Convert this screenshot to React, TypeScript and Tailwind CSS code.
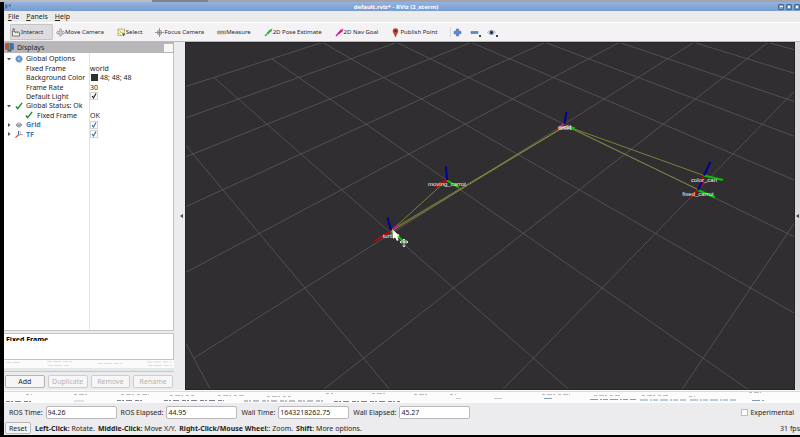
import React from 'react';

const HORIZON = -203.1;

// Projects a ground-grid vertex to viewport coordinates.
function project(u: number, v: number): [number, number] {
  const n = u + v;
  const scale = 1 / (0.00589 + 0.000842 * n);
  return [488.5 + (0.264 + (u - v) / 2) * scale, HORIZON + 3.306 * scale];
}

function gridLines() {
  const lines: number[][] = [];
  for (let u = -2; u <= 8; u++) lines.push([...project(u, -3), ...project(u, 7)]);
  for (let v = -3; v <= 7; v++) lines.push([...project(-2, v), ...project(8, v)]);
  return lines;
}

function Scene() {
  return (
    <svg viewBox="186 43 608 346" preserveAspectRatio="xMidYMid slice" className="block h-full w-full" aria-label="3D view">
      <g stroke="#59585a" strokeWidth="0.8">
        {gridLines().map(([x1, y1, x2, y2], i) => (
          <line key={i} x1={x1} y1={y1} x2={x2} y2={y2} />
        ))}
      </g>
      <g stroke="#93933f" strokeWidth="0.8" fill="none">
        <path d="M392 230L447 180" />
        <path d="M392 231L565 126.500" />
        <path d="M392 229.500L565 126" />
        <path d="M566 126L704 175.500" />
        <path d="M566 126L698 189.500" />
      </g>
      <g strokeWidth="2" fill="none">
        <path stroke="#c80000" d="M447 180.500L435 187M391 231L375 241M562 126L557 129M703.500 176L702.500 186M698 190L690.500 198" />
        <path stroke="#00c800" d="M447 180.500L459 187.500M391 231L406 243M567 126L575 128.500M704 175.500L723 180M698 190L715 197.500" />
        <path stroke="#00009c" d="M447 180L446 166.500M391 230L387.500 217.500M564.500 124L566.500 112M704 175.500L710.500 162M698 190L702 182" />
        <path stroke="#d01880" d="M393 229.500L398 225.500M559 127L564 124M568 125L570 126.500" />
      </g>
      <g fill="#f0f0f0" fontFamily="'Liberation Sans', Arial, sans-serif" fontSize="6" textAnchor="middle">
        <text x="447" y="186">moving_carrot</text>
        <text x="391" y="238">turtle2</text>
        <text x="704" y="182">color_can</text>
        <text x="698" y="196">fixed_carrot</text>
        <text x="565" y="129" fontSize="5">world</text>
        <text x="565" y="130" fontSize="5">turtle1</text>
      </g>
      <path d="M392.500 229.500L393 239L395 237.300L397 241L398.600 240L396.800 236.500L399.500 236Z" fill="#fff" />
      <path d="M404 239v8M400 242h8M402.500 240.500l1.500-1.500l1.500 1.500M402.500 245.500l1.500 1.500l1.500-1.500M401.500 240.500l-1.500 1.500l1.500 1.500M406.500 240.500l1.500 1.500l-1.500 1.500" stroke="#eee" strokeWidth="0.9" fill="none" />
    </svg>
  );
}

function Icon({ children, size = 'size-[9px]' }: { children: React.ReactNode; size?: string }) {
  return (
    <svg viewBox="0 0 18 18" className={`${size} shrink-0`} fill="none" aria-hidden="true">
      {children}
    </svg>
  );
}

const hand = (
  <Icon>
    <path d="M3 16v-6l-1-3 2 1V1.500h2.500V8H15c2 0 2 1 2 2v6H5z" fill="#f2f2f2" stroke="#4c4c4c" strokeWidth="1.500" />
    <path d="M9.500 8v3M13 8v3" stroke="#4c4c4c" />
  </Icon>
);
const move = (
  <Icon>
    <path d="M9 1l3 4h-1.500v3H14V6l3.500 3.500L14 13v-2h-3.500v5h-3v-5H4v2L.5 9.500 4 6v2h3.500V5H6z" fill="#ddd" stroke="#888" strokeWidth="1.300" />
  </Icon>
);
const select = (
  <Icon>
    <path d="M2 2h13v13H2z" fill="#f6f1a8" stroke="#777050" strokeWidth="1.500" strokeDasharray="2 1" />
    <path d="M5 5l5 5M5 11l3-3" stroke="#b3a84c" />
    <path d="M10 9l7 4-3 1-1 3z" fill="#555" />
  </Icon>
);
const focus = (
  <Icon>
    <circle cx="9" cy="9" r="4.500" fill="#ddd" stroke="#9a9a9a" strokeWidth="2" />
    <path d="M9 0v18M0 9h18" stroke="#9a9a9a" strokeWidth="2" />
    <circle cx="9" cy="9" r="2" fill="#777" />
  </Icon>
);
const ruler = (
  <Icon>
    <path d="M1 6.500h16v5H1z" fill="#dccb9a" stroke="#8d7c4c" strokeWidth="1.300" />
    <path d="M4 7v3M7 7v3M10 7v3M13 7v3" stroke="#6d5c34" />
  </Icon>
);
const arrow = (color: string) => (
  <Icon>
    <path d="M2 16l8-8" stroke={color} strokeWidth="3" />
    <path d="M17 1l-3 8-5-4z" fill={color} />
    <path d="M7 11l6-6" stroke={color} strokeWidth="4" />
  </Icon>
);
const pin = (
  <Icon>
    <path d="M9 18C8 13 4 10 4 6a5 5 0 0 1 10 0c0 4-4 7-5 12z" fill="#c8432a" stroke="#7a2c1c" />
    <circle cx="9" cy="6" r="2.200" fill="#4d2016" />
  </Icon>
);

const tools = [
  { label: 'Move Camera', icon: move },
  { label: 'Select', icon: select },
  { label: 'Focus Camera', icon: focus },
  { label: 'Measure', icon: ruler },
  { label: '2D Pose Estimate', icon: arrow('#25b93c') },
  { label: '2D Nav Goal', icon: arrow('#d0198c') },
  { label: 'Publish Point', icon: pin },
];

function Toolbar() {
  return (
    <div role="toolbar" className="flex h-[19px] shrink-0 items-center overflow-hidden border-b border-[#bdbabd] bg-[#f5f2f5] pl-[6px] text-[6px]">
      <button className="mr-[3px] flex h-4 w-[43px] shrink-0 items-center gap-px rounded-[1px] border border-[#c6c4c6] bg-[#dddbdd] whitespace-nowrap">
        {hand}Interact
      </button>
      {tools.map((t) => (
        <button key={t.label} className="flex h-4 shrink-0 items-center pr-[13px] whitespace-nowrap">
          {t.icon}
          {t.label}
        </button>
      ))}
      <span className="h-[10px] w-px bg-[#dcd9dc]" />
      <button aria-label="Add tool" className="ml-[2px]">
        <Icon>
          <path d="M6.500 2h5v4.500H16v5h-4.500V16h-5v-4.500H2v-5h4.500z" fill="#5b8ac6" stroke="#3a689f" />
        </Icon>
      </button>
      <button aria-label="Remove tool" className="ml-2 flex items-end">
        <Icon>
          <path d="M2 7h14v4H2z" fill="#5b8ac6" stroke="#3a689f" />
        </Icon>
        <i className="size-[2px] bg-[#444]" />
      </button>
      <button aria-label="Tool visibility" className="ml-[6px] flex items-end">
        <Icon>
          <path d="M1 9c4-6 12-6 16 0-4 6-12 6-16 0z" fill="#e8e8ec" stroke="#888" />
          <circle cx="9" cy="9" r="4" fill="#3c5a8c" />
          <circle cx="9" cy="9" r="1.800" fill="#111" />
        </Icon>
        <i className="size-[2px] bg-[#444]" />
      </button>
    </div>
  );
}

function Tick({ color = '#222', label }: { color?: string; label: string }) {
  return (
    <span className="relative flex size-[8px]">
      <input type="checkbox" defaultChecked aria-label={label} className="size-[8px] appearance-none border border-[#d2d2d2] bg-white" />
      <svg viewBox="0 0 16 16" className="pointer-events-none absolute inset-0" fill="none" aria-hidden="true">
        <path d="M4 8l3 4 5-9" stroke={color} strokeWidth="2.400" />
      </svg>
    </span>
  );
}

const check = (
  <Icon size="size-[8px]">
    <path d="M2 10l4 5L16 2" stroke="#1c8a34" strokeWidth="3.200" />
  </Icon>
);
const gear = (
  <Icon size="size-[8px]">
    <circle cx="9" cy="9" r="7" fill="#6f9ad0" stroke="#4a78b4" strokeWidth="2" strokeDasharray="2.500 1.500" />
    <circle cx="9" cy="9" r="3" fill="#9dbde4" />
  </Icon>
);
const gridIcon = (
  <Icon size="size-[8px]">
    <path d="M9 4l7 5-7 5-7-5zM5 7l7 5M13 7l-8 5" stroke="#666" strokeWidth="1.700" />
  </Icon>
);
const tfIcon = (
  <Icon size="size-[8px]">
    <path d="M8 11V2" stroke="#2c50b0" strokeWidth="2" />
    <path d="M8 11l-7 6" stroke="#d03020" strokeWidth="2.500" />
    <path d="M8 11l9-1" stroke="#c06a50" strokeWidth="2" />
    <path d="M12 3v5" stroke="#7a8cc0" strokeWidth="1.500" />
  </Icon>
);

type Row = {
  label: string;
  value?: React.ReactNode;
  icon?: React.ReactNode;
  toggle?: 'open' | 'closed';
  nested?: boolean;
  strong?: boolean;
};

const rows: Row[] = [
  { label: 'Global Options', icon: gear, toggle: 'open' },
  { label: 'Fixed Frame', value: 'world' },
  {
    label: 'Background Color',
    value: (
      <>
        <i className="mr-[2px] ml-px size-[7px] bg-[#303030]" />
        48; 48; 48
      </>
    ),
  },
  { label: 'Frame Rate', value: '30' },
  { label: 'Default Light', value: <Tick label="Default Light" /> },
  { label: 'Global Status: Ok', icon: check, toggle: 'open' },
  { label: 'Fixed Frame', icon: check, nested: true, value: 'OK' },
  { label: 'Grid', icon: gridIcon, toggle: 'closed', strong: true, value: <Tick color="#3b6ea8" label="Grid" /> },
  { label: 'TF', icon: tfIcon, toggle: 'closed', strong: true, value: <Tick color="#3b6ea8" label="TF" /> },
];

function Tree() {
  return (
    <div className="min-h-0 flex-1 border-r border-b border-[#c4c2c4] bg-white">
      <div className="flex h-full bg-[linear-gradient(#e4e4e4,#e4e4e4)] bg-[length:1px_100%] bg-[position:85px_0] bg-no-repeat">
        <div role="tree" className="grid h-[86px] w-full grid-rows-9 pt-px">
          {rows.map((r, i) => (
            <div key={i} role="treeitem" className="grid min-h-0 grid-cols-[86px_1fr] items-center leading-[9px]">
              <div className={`flex items-center whitespace-nowrap ${r.nested ? 'pl-[21px]' : r.icon ? 'pl-[3px]' : 'pl-[22px]'}`}>
                {r.toggle && (
                  <svg viewBox="0 0 8 8" className="mr-1 size-[4px]" aria-hidden="true">
                    <path d={r.toggle === 'open' ? 'M0 2h8L4 7z' : 'M2 0v8l5-4z'} fill="#555" />
                  </svg>
                )}
                {r.icon && <span className={r.nested ? 'mr-1' : 'mr-[3px]'}>{r.icon}</span>}
                <span className={r.strong ? 'font-bold text-[#3d7cc4]' : ''}>{r.label}</span>
              </div>
              <div className="flex items-center whitespace-nowrap">{r.value}</div>
            </div>
          ))}
        </div>
      </div>
    </div>
  );
}

function Displays() {
  return (
    <section className="flex w-[170px] shrink-0 flex-col">
      <header className="flex h-[11px] shrink-0 items-center gap-[3px] bg-[#b9b6b9] pr-px pl-px">
        <svg viewBox="0 0 18 18" className="size-[9px]" aria-hidden="true">
          <path d="M1 1h16v12H1z" fill="#333" />
          <path d="M2 2h5v10H2z" fill="#d44" />
          <path d="M7 2h4v10H7z" fill="#4b4" />
          <path d="M11 2h5v10h-5z" fill="#46d" />
          <path d="M5 14h8v3H5z" fill="#555" />
        </svg>
        <h2 className="flex-1 leading-[10px]">Displays</h2>
        <button aria-label="Close panel" className="h-[8px] w-[9px] bg-[#f8f7f8]" />
      </header>
      <Tree />
      <div className="mt-[2px] h-[27px] shrink-0 border border-l-0 border-[#c4c2c4] bg-white px-[2px] pt-[2px]">
        <div className="h-[5px] overflow-hidden text-[7px] leading-[8px] font-bold text-black">Fixed Frame</div>
      </div>
      <svg viewBox="0 0 170 12" preserveAspectRatio="none" className="h-[12px] w-full shrink-0" aria-hidden="true">
        <path d="M0 0h170v8H0z" fill="#fbfbfb" />
        <path d="M0 8h170v3H0z" fill="#e3e7e5" />
        <path d="M0 11.500h170" stroke="#c8c6c8" />
        <path d="M2 2.500h16M43 1.500h25M94 3.500h24M143 2h24M44 5.500h22M144 5.500h24" stroke="#ccd0cd" strokeWidth="0.700" strokeDasharray="5 1 8 2" />
      </svg>
      <div className="mt-[3px] mb-[2px] grid h-[13px] shrink-0 grid-cols-4 gap-[3px] px-px">
        {['Add', 'Duplicate', 'Remove', 'Rename'].map((b, i) => (
          <button
            key={b}
            disabled={i > 0}
            className="rounded-[2px] border border-[#b5b2b5] bg-[#f7f6f7] leading-[10px] text-[#222] disabled:border-[#cfcdcf] disabled:text-[#b4b2b4]"
          >
            {b}
          </button>
        ))}
      </div>
    </section>
  );
}

function Gutter({ className }: { className: string }) {
  return (
    <div className={`flex shrink-0 items-center justify-center ${className}`}>
      <svg viewBox="0 0 6 8" className="h-1 w-[3px]" aria-hidden="true">
        <path d="M6 0v8L0 4z" fill="#444" />
      </svg>
    </div>
  );
}

function Residue() {
  return (
    <svg viewBox="0 0 796 13" preserveAspectRatio="none" className="h-[13px] w-full shrink-0 bg-[#fcfcfd]" aria-hidden="true">
      <path d="M0 1.500h796" stroke="#dad8dc" />
      <path d="M22 4.500h6M70 4.500h16M117 4.500h28M166 5.500h24M214 5.500h26M263 6.500h24M322 3.500h7M368 3.500h14M410 4.500h14M446 4.500h6M538 4.500h28M590 5.500h26M638 5.500h26M685 6.500h6M745 2.500h12" stroke="#9c9ca2" strokeWidth="0.700" strokeDasharray="3 2 5 1 2 3" />
      <path d="M2 11.500h26M113 10.500h26M160 10.500h60M240 11h80M330 11.500h66" stroke="#5c6270" strokeWidth="0.800" strokeDasharray="4 1 2 2 6 3" />
      <path d="M540 8.500h10M586 9.500h46M636 10h46M686 10h46M748 10.500h12" stroke="#6484a4" strokeWidth="0.800" strokeDasharray="8 2 2 1 5 2" />
      <path d="M70 11h10M452 8.500h5M490 8.500h8" stroke="#bbb" strokeWidth="0.800" />
    </svg>
  );
}

const clocks = [
  ['ROS Time:', '94.26', 'ros-time'],
  ['ROS Elapsed:', '44.95', 'ros-elapsed'],
  ['Wall Time:', '1643218262.75', 'wall-time'],
  ['Wall Elapsed:', '45.27', 'wall-elapsed'],
];

export default function App() {
  return (
    <div className="flex h-screen min-h-[300px] flex-col overflow-hidden bg-black font-['Noto_Sans','DejaVu_Sans',sans-serif] text-[7px] leading-[9px] text-[#262626]">
      <div className="h-[2px] shrink-0 bg-[linear-gradient(90deg,#bcbabc_19%,#858085_19%_26%,#a7a2a7_26%)]" />
      <div className="ml-1 flex min-h-0 flex-1 flex-col border-b-[2px] border-black bg-[#ecebed]">
        <header className="grid h-[9px] shrink-0 grid-cols-[1fr_auto_1fr] items-center bg-[linear-gradient(#93b3e0,#789ccd)] text-[6px] leading-[8px] text-white">
          <svg viewBox="0 0 12 10" className="ml-px h-[5px] w-[6px]" aria-hidden="true">
            <path d="M0 1h5v8H0zM7 1h5v4H7z" fill="#60718c" />
          </svg>
          <h1 className="pr-3 font-bold">default.rviz* - RViz (2_xterm)</h1>
          <div className="flex justify-end gap-[2px]">
            {['Minimize', 'Maximize', 'Close'].map((n) => (
              <button key={n} aria-label={n} className="flex size-[6px] items-center justify-center rounded-[1px] border border-[#49699a] bg-[#7b9dcc]">
                <i className={n === 'Minimize' ? 'h-px w-[3px] bg-white' : 'size-[2px] bg-white'} />
              </button>
            ))}
          </div>
        </header>
        <nav className="flex h-[12px] shrink-0 items-center gap-[7px] border-b border-white bg-[#ecebec] pl-[4px]">
          {['File', 'Panels', 'Help'].map((m) => (
            <button key={m} className="leading-[10px]">
              <span className="underline">{m[0]}</span>
              {m.slice(1)}
            </button>
          ))}
        </nav>
        <Toolbar />
        <main className="flex min-h-0 flex-1">
          <Displays />
          <Gutter className="w-[11px] pl-1" />
          <div className="min-w-0 flex-1 overflow-hidden border border-[#242325] bg-[#302e30]">
            <Scene />
          </div>
          <Gutter className="w-[5px] bg-[#dcdadd]" />
        </main>
        <Residue />
        <form className="flex h-[18px] shrink-0 items-center pl-[5px]">
          {clocks.map(([label, value, id]) => (
            <div key={id} className="mr-1 flex items-center gap-[3px]">
              <label htmlFor={id} className="whitespace-nowrap">{label}</label>
              <input id={id} readOnly defaultValue={value} className="h-[13px] w-[71px] rounded-[2px] border border-[#bbb8bb] bg-white px-px" />
            </div>
          ))}
          <label className="mr-[6px] ml-auto flex items-center gap-[2px]">
            <input type="checkbox" className="size-[7px] appearance-none border border-[#bdbdbd] bg-white" />
            Experimental
          </label>
        </form>
        <footer className="flex h-[14px] shrink-0 items-center overflow-hidden pl-px whitespace-nowrap">
          <button className="mr-1 h-[12px] w-[26px] rounded-[2px] border border-[#bbb8bb] bg-[#f6f5f6] leading-[9px]">Reset</button>
          <p className="flex flex-1 gap-[3px]">
            <span><b>Left-Click:</b> Rotate.</span>
            <span><b>Middle-Click:</b> Move X/Y.</span>
            <span><b>Right-Click/Mouse Wheel:</b>: Zoom.</span>
            <span><b>Shift</b>: More options.</span>
          </p>
          <output>31 fps</output>
        </footer>
      </div>
    </div>
  );
}
